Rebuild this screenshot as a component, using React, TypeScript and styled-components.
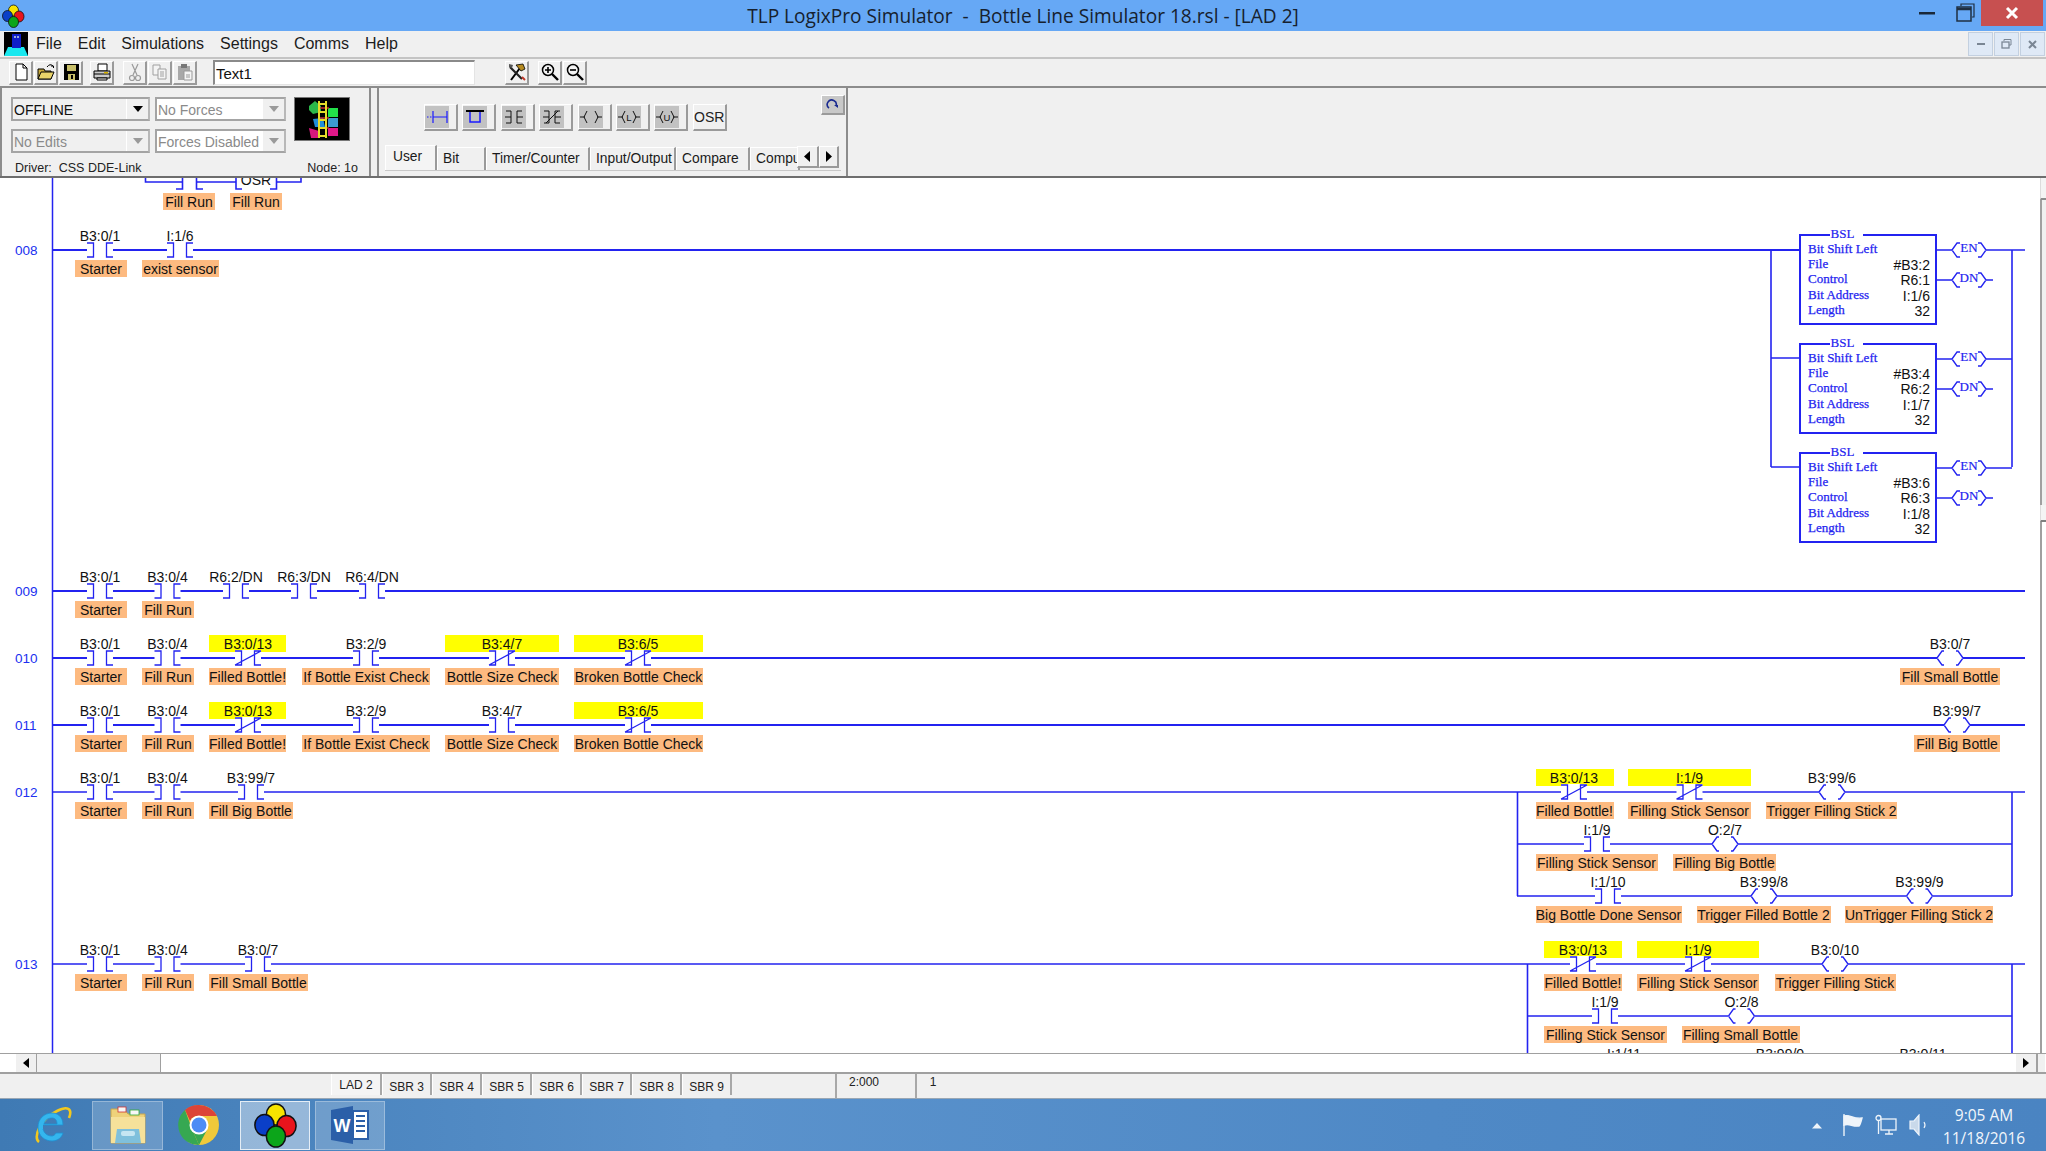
import React from "react";
import styled, { createGlobalStyle } from "styled-components";

const GlobalStyle = createGlobalStyle`
  html, body {
    margin: 0;
    padding: 0;
    width: 2046px;
    height: 1151px;
    overflow: hidden;
    background: #f0f0f0;
    font-family: "Liberation Sans", Arial, sans-serif;
  }
  * { box-sizing: border-box; }
`;

const BLUE = "#2323f0";
const TOP = 178;

const Win = styled.div`
  width: 2046px;
  height: 1151px;
  display: flex;
  flex-direction: column;
  background: #f0f0f0;
`;

/* title bar */
const TitleBar = styled.div`
  height: 31px;
  flex: none;
  background: #66a8f5;
  display: grid;
  grid-template-columns: 1fr auto 1fr;
  align-items: center;
`;
const Title = styled.div`
  font-family: "Open Sans", "Noto Sans", sans-serif;
  font-size: 19.1px;
  color: #16212e;
  white-space: pre;
`;
const TitleLogo = styled.div`
  padding-left: 1px;
  display: flex;
`;
const WinButtons = styled.div`
  justify-self: end;
  display: flex;
  align-items: flex-start;
  height: 31px;
  padding-right: 3px;
`;
const WinBtn = styled.div<{ $w: number; $mr?: number }>`
  width: ${(p) => p.$w}px;
  height: 26px;
  margin-right: ${(p) => p.$mr ?? 0}px;
  display: flex;
  align-items: center;
  justify-content: center;
`;
const CloseBtn = styled(WinBtn)`
  background: #c75050;
`;

/* menu */
const MenuBar = styled.div`
  height: 28px;
  flex: none;
  display: flex;
  align-items: center;
  background: #f0f0f0;
  border-bottom: 2px solid #c4c4c4;
  padding-left: 4px;
`;
const MenuItem = styled.span`
  font-size: 16px;
  color: #1c1c1c;
  margin-left: 16px;
  &:first-of-type {
    margin-left: 8px;
  }
`;
const MdiButtons = styled.div`
  margin-left: auto;
  display: flex;
  gap: 1px;
  padding-right: 1px;
`;
const MdiBtn = styled.div`
  width: 25px;
  height: 24px;
  background: #dfe9f6;
  border: 1px solid #c3d0e0;
  display: flex;
  align-items: center;
  justify-content: center;
`;

/* toolbar */
const Toolbar = styled.div`
  height: 29px;
  flex: none;
  display: flex;
  align-items: center;
  padding: 0 0 0 9px;
  border-bottom: 2px solid #8c8c8c;
`;
const ToolBtn = styled.div<{ $gap?: number }>`
  width: 24px;
  height: 24px;
  margin-left: ${(p) => p.$gap ?? 1}px;
  flex: none;
  display: flex;
  align-items: center;
  justify-content: center;
  background: #f0f0f0;
  border-right: 2px solid #9a9a9a;
  border-bottom: 2px solid #9a9a9a;
  border-top: 1px solid #fff;
  border-left: 1px solid #fff;
`;
const TextBox = styled.div`
  width: 262px;
  height: 25px;
  margin-left: 16px;
  flex: none;
  background: #fff;
  border-top: 2px solid #8a8a8a;
  border-left: 2px solid #8a8a8a;
  border-right: 1px solid #e4e4e4;
  border-bottom: 1px solid #e4e4e4;
  font-size: 15px;
  line-height: 23px;
  padding-left: 1px;
  color: #111;
`;

/* mode strip */
const Strip = styled.div`
  height: 90px;
  flex: none;
  display: flex;
  gap: 6px;
  border-bottom: 2px solid #6e6e6e;
`;
const ModePanel = styled.div`
  width: 371px;
  border-right: 2px solid #8c8c8c;
  border-left: 2px solid #8c8c8c;
  padding: 9px 0 0 9px;
  display: flex;
  flex-direction: column;
`;
const ModeTop = styled.div`
  display: flex;
  gap: 8px;
  align-items: flex-start;
`;
const ComboGrid = styled.div`
  display: grid;
  grid-template-columns: 139px 131px;
  grid-auto-rows: 24px;
  gap: 8px 5px;
`;
const Combo = styled.div<{ $off?: boolean; $white?: boolean }>`
  position: relative;
  background: ${(p) => (p.$white ? "#fff" : "#f0f0f0")};
  border: 2px solid #a4a4a4;
  border-right-color: #b8b8b8;
  color: ${(p) => (p.$off ? "#8a8a8a" : "#111")};
  font-size: 14px;
  line-height: 22px;
  padding-left: 1px;
  white-space: nowrap;
  overflow: hidden;
`;
const ComboArrow = styled.div<{ $off?: boolean }>`
  position: absolute;
  right: 0;
  top: 0;
  bottom: 0;
  width: 22px;
  background: #f0f0f0;
  border-left: 1px solid #fff;
  display: flex;
  align-items: center;
  justify-content: center;
  &::after {
    content: "";
    border-left: 5px solid transparent;
    border-right: 5px solid transparent;
    border-top: 6px solid ${(p) => (p.$off ? "#9a9a9a" : "#000")};
  }
`;
const PlcImage = styled.div`
  width: 56px;
  height: 44px;
  background: #000;
  border: 1px solid #777;
  display: flex;
`;
const DriverRow = styled.div`
  display: flex;
  justify-content: space-between;
  padding: 8px 11px 0 4px;
  font-size: 12.5px;
  color: #222;
  white-space: pre;
`;

const PalettePanel = styled.div`
  position: relative;
  width: 471px;
  border-left: 2px solid #8c8c8c;
  border-right: 2px solid #8c8c8c;
  display: flex;
  flex-direction: column;
  padding-top: 16px;
`;
const PaletteRow = styled.div`
  display: flex;
  gap: 4.4px;
  padding-left: 45px;
`;
const PaletteBtn = styled.div`
  width: 34px;
  height: 27px;
  background: #f0f0f0;
  border-right: 2px solid #9a9a9a;
  border-bottom: 2px solid #9a9a9a;
  border-top: 1px solid #fff;
  border-left: 1px solid #fff;
  display: flex;
  font-size: 14px;
  color: #222;
  align-items: center;
  justify-content: center;
`;
const PaletteFace = styled.div`
  width: 100%;
  margin-right: 7px;
  height: 22px;
  background: #c2c2c2;
  display: flex;
  align-items: center;
  justify-content: center;
`;
const RefreshBtn = styled.div`
  position: absolute;
  right: 1px;
  top: 7px;
  width: 24px;
  height: 20px;
  background: #c8c8c8;
  border-right: 2px solid #9a9a9a;
  border-bottom: 2px solid #9a9a9a;
  border-top: 1px solid #fff;
  border-left: 1px solid #fff;
  display: flex;
  align-items: center;
  justify-content: center;
`;
const TabRow = styled.div`
  position: relative;
  margin-top: 15px;
  margin-left: 6px;
  width: 456px;
  height: 25px;
  display: flex;
  align-items: flex-end;
  border-bottom: 1px solid #c8c8c8;
`;
const Tab = styled.div<{ $w: number; $active?: boolean }>`
  width: ${(p) => p.$w}px;
  height: ${(p) => (p.$active ? 25 : 23)}px;
  flex: none;
  font-size: 13.8px;
  color: #1a1a1a;
  line-height: 22px;
  padding-left: ${(p) => (p.$active ? 7 : 5)}px;
  padding-bottom: ${(p) => (p.$active ? 3 : 0)}px;
  border-top: 1px solid #fff;
  border-left: 1px solid #fff;
  border-right: 2px solid #9a9a9a;
  white-space: nowrap;
  overflow: hidden;
  background: ${(p) => (p.$active ? "#f4f4f4" : "#f0f0f0")};
`;
const TabArrows = styled.div`
  position: absolute;
  right: 2px;
  top: 0;
  display: flex;
`;
const TabArrow = styled.div<{ $w: number }>`
  width: ${(p) => p.$w}px;
  height: 22px;
  background: #f0f0f0;
  border-right: 2px solid #9a9a9a;
  border-bottom: 2px solid #9a9a9a;
  border-top: 1px solid #fff;
  border-left: 1px solid #fff;
  display: flex;
  align-items: center;
  justify-content: center;
`;

/* ladder */
const Canvas = styled.div`
  position: relative;
  height: 875px;
  flex: none;
  background: #fff;
  overflow: hidden;
`;
const WireLayer = styled.svg`
  position: absolute;
  left: 0;
  top: 0;
`;
const Placed = styled.div.attrs<{ $x: number; $y: number; $w?: number }>((p) => ({
  style: { left: p.$x, top: p.$y - TOP, width: p.$w },
}))<{ $x: number; $y: number; $w?: number }>`
  position: absolute;
`;
const RungNo = styled(Placed)`
  font-size: 13.5px;
  line-height: 18px;
  color: #2030f0;
`;
const Addr = styled(Placed)`
  font-size: 14px;
  line-height: 16px;
  color: #111;
  text-align: center;
  white-space: nowrap;
`;
const Tag = styled(Placed)`
  height: 17px;
  background: #fdba80;
  font-size: 14px;
  line-height: 19px;
  color: #111;
  text-align: center;
  white-space: nowrap;
`;
const Highlight = styled(Placed)`
  height: 17px;
  background: #ffff00;
`;
const BslBox = styled(Placed)`
  width: 138px;
  height: 91px;
  background: #fff;
  border: 2px solid ${BLUE};
  padding: 5px 5px 0 7px;
  font-family: "Liberation Serif", serif;
  color: ${BLUE};
`;
const BslTitle = styled.div`
  position: absolute;
  top: -9px;
  left: 29px;
  width: 33px;
  background: #fff;
  text-align: center;
  font-size: 13px;
  line-height: 14px;
  -webkit-text-stroke: 0.2px ${BLUE};
  text-indent: -8px;
`;
const BslRow = styled.div`
  display: flex;
  justify-content: space-between;
  height: 15.2px;
  font-size: 13px;
  line-height: 15px;
  -webkit-text-stroke: 0.25px ${BLUE};
`;
const BslValue = styled.span`
  font-family: "Liberation Sans", sans-serif;
  font-size: 14px;
  color: #111;
  -webkit-text-stroke: 0;
  transform: translateY(2px);
`;
const CoilText = styled(Placed)`
  width: 34px;
  text-align: center;
  font-family: "Liberation Serif", serif;
  font-size: 13px;
  line-height: 14px;
  color: ${BLUE};
  -webkit-text-stroke: 0.2px ${BLUE};
`;

const VScroll = styled.div`
  position: absolute;
  left: 2040px;
  top: 0;
  bottom: 0;
  width: 6px;
  background: #fff;
  border-left: 2px solid #a0a0a0;
`;
const VTopBtn = styled.div`
  position: absolute;
  left: -2px;
  top: 0;
  width: 8px;
  height: 22px;
  background: #f4f4f4;
  border-left: 1px solid #dcdcdc;
  border-bottom: 2px solid #8c8c8c;
`;
const VThumb = styled.div`
  position: absolute;
  left: 0;
  top: 22px;
  width: 100%;
  height: 305px;
  background: #f0f0f0;
`;
const VNotch = styled.div`
  position: absolute;
  left: -2px;
  top: 327px;
  width: 8px;
  height: 17px;
  background: #f4f4f4;
  border-left: 1px solid #dcdcdc;
  border-bottom: 2px solid #808080;
`;

const HScroll = styled.div`
  height: 21px;
  flex: none;
  background: #fff;
  display: flex;
  padding-left: 16px;
  border-top: 1px solid #a0a0a0;
  border-bottom: 2px solid #a0a0a0;
`;
const HArrow = styled.div<{ $dir: "l" | "r" }>`
  width: 21px;
  height: 18px;
  background: #f0f0f0;
  border-right: 1px solid #a0a0a0;
  display: flex;
  align-items: center;
  justify-content: center;
  &::after {
    content: "";
    border-top: 5px solid transparent;
    border-bottom: 5px solid transparent;
    ${(p) => (p.$dir === "l" ? "border-right: 6px solid #000;" : "border-left: 6px solid #000;")}
  }
`;
const HThumb = styled.div`
  width: 124px;
  background: #f0f0f0;
  border-right: 1px solid #a0a0a0;
`;
const HTrack = styled.div`
  width: 1855px;
`;
const HEnd = styled.div`
  width: 8px;
  background: #f0f0f0;
  border-left: 1px solid #a0a0a0;
`;

const StatusBar = styled.div`
  height: 25px;
  flex: none;
  display: flex;
  background: #f0f0f0;
  padding-left: 331px;
  border-bottom: 1px solid #9aa7b4;
  font-size: 12px;
  color: #222;
`;
const SheetTab = styled.div<{ $active?: boolean }>`
  width: ${(p) => (p.$active ? 51 : 50)}px;
  height: 21px;
  padding-top: ${(p) => (p.$active ? 3 : 5)}px;
  line-height: 17px;
  text-align: center;
  border-right: 2px solid #a8a8a8;
  background: ${(p) => (p.$active ? "#f4f4f4" : "#f0f0f0")};
  border-left: 1px solid #fff;
`;
const StatusCell = styled.div<{ $w: number; $ml?: number; $pr: number }>`
  width: ${(p) => p.$w}px;
  margin-left: ${(p) => p.$ml ?? 0}px;
  padding-right: ${(p) => p.$pr}px;
  border-left: 2px solid #a8a8a8;
  text-align: center;
  line-height: 16px;
`;

/* taskbar */
const Taskbar = styled.div`
  height: 52px;
  flex: none;
  display: flex;
  align-items: center;
  background: linear-gradient(90deg, #3f7ab4 0%, #5a92cc 35%, #4f89c6 70%, #4a84c2 100%);
  padding-left: 29px;
`;
const TaskItem = styled.div<{ $active?: boolean; $open?: boolean; $w: number; $ml?: number }>`
  width: ${(p) => p.$w}px;
  height: 49px;
  margin-left: ${(p) => p.$ml ?? 0}px;
  flex: none;
  display: flex;
  align-items: center;
  justify-content: center;
  background: ${(p) =>
    p.$active ? "rgba(255,255,255,0.42)" : p.$open ? "rgba(255,255,255,0.2)" : "transparent"};
  border: ${(p) =>
    p.$active
      ? "1px solid rgba(255,255,255,0.75)"
      : p.$open
        ? "1px solid rgba(255,255,255,0.3)"
        : "none"};
`;
const Tray = styled.div`
  margin-left: auto;
  display: flex;
  align-items: center;
  height: 100%;
`;
const TrayIcon = styled.div<{ $mr: number }>`
  display: flex;
  margin-right: ${(p) => p.$mr}px;
`;
const Clock = styled.div`
  width: 114px;
  margin-right: 5px;
  padding-top: 3px;
  font-family: "Open Sans", "Noto Sans", sans-serif;
  font-size: 15.5px;
  line-height: 23px;
  text-align: center;
  color: #f2f6fb;
`;

/* ladder data */
type Kind = "no" | "nc" | "coil";
type Item = {
  kind: Kind;
  c: number;
  addr: string;
  tag: string;
  tx: number;
  tw: number;
  hi?: boolean;
};
type Branch = { y: number; x1: number; x2: number; items: Item[] };

const it = (kind: Kind, c: number, addr: string, tag: string, tx: number, tw: number, hi?: boolean): Item => ({
  kind, c, addr, tag, tx, tw, hi,
});
const starter = it("no", 100, "B3:0/1", "Starter", 75, 52);
const fillRun = it("no", 167.5, "B3:0/4", "Fill Run", 142, 52);
const filled = (hi: boolean) => it("nc", 248, "B3:0/13", "Filled Bottle!", 209, 77, hi);
const exist = it("no", 366, "B3:2/9", "If Bottle Exist Check", 302, 128);
const broken = it("nc", 638, "B3:6/5", "Broken Bottle Check", 574, 129, true);

const branches: Branch[] = [
  {
    y: 250, x1: 52, x2: 1799,
    items: [starter, it("no", 180, "I:1/6", "exist sensor", 142, 77)],
  },
  {
    y: 591, x1: 52, x2: 2025,
    items: [
      starter,
      fillRun,
      it("no", 236, "R6:2/DN", "", 0, 0),
      it("no", 304, "R6:3/DN", "", 0, 0),
      it("no", 372, "R6:4/DN", "", 0, 0),
    ],
  },
  {
    y: 658, x1: 52, x2: 2025,
    items: [
      starter, fillRun, filled(true), exist,
      it("nc", 502, "B3:4/7", "Bottle Size Check", 445, 114, true),
      broken,
      it("coil", 1950, "B3:0/7", "Fill Small Bottle", 1900, 100),
    ],
  },
  {
    y: 725, x1: 52, x2: 2025,
    items: [
      starter, fillRun, filled(true), exist,
      it("no", 502, "B3:4/7", "Bottle Size Check", 445, 114),
      broken,
      it("coil", 1957, "B3:99/7", "Fill Big Bottle", 1914, 86),
    ],
  },
  {
    y: 792, x1: 52, x2: 2025,
    items: [
      starter, fillRun,
      it("no", 251, "B3:99/7", "Fill Big Bottle", 209, 84),
      it("nc", 1574, "B3:0/13", "Filled Bottle!", 1535.5, 78, true),
      it("nc", 1689.5, "I:1/9", "Filling Stick Sensor", 1628, 123, true),
      it("coil", 1832, "B3:99/6", "Trigger Filling Stick 2", 1766, 131),
    ],
  },
  {
    y: 844, x1: 1517, x2: 2012,
    items: [
      it("no", 1597, "I:1/9", "Filling Stick Sensor", 1535.5, 122),
      it("coil", 1725, "O:2/7", "Filling Big Bottle", 1673, 103),
    ],
  },
  {
    y: 896, x1: 1517, x2: 2012,
    items: [
      it("no", 1608, "I:1/10", "Big Bottle Done Sensor", 1535.5, 146),
      it("coil", 1764, "B3:99/8", "Trigger Filled Bottle 2", 1696.5, 134),
      it("coil", 1919.5, "B3:99/9", "UnTrigger Filling Stick 2", 1845, 148),
    ],
  },
  {
    y: 964, x1: 52, x2: 2025,
    items: [
      starter, fillRun,
      it("no", 258, "B3:0/7", "Fill Small Bottle", 209, 99),
      it("nc", 1583, "B3:0/13", "Filled Bottle!", 1544, 78, true),
      it("nc", 1698, "I:1/9", "Filling Stick Sensor", 1637, 122, true),
      it("coil", 1835, "B3:0/10", "Trigger Filling Stick", 1774.5, 121),
    ],
  },
  {
    y: 1016, x1: 1527, x2: 2012,
    items: [
      it("no", 1605, "I:1/9", "Filling Stick Sensor", 1544, 123),
      it("coil", 1741.5, "O:2/8", "Filling Small Bottle", 1681.5, 118),
    ],
  },
  {
    y: 1068, x1: 1527, x2: 2012,
    items: [
      it("no", 1624, "I:1/11", "", 0, 0),
      it("coil", 1780, "B3:99/0", "", 0, 0),
      it("coil", 1923, "B3:0/11", "", 0, 0),
    ],
  },
];

const rungNumbers = [
  { n: "008", y: 250 },
  { n: "009", y: 591 },
  { n: "010", y: 658 },
  { n: "011", y: 725 },
  { n: "012", y: 792 },
  { n: "013", y: 964 },
];

const bsl = [
  { y: 234, file: "#B3:2", ctl: "R6:1", bit: "I:1/6" },
  { y: 343, file: "#B3:4", ctl: "R6:2", bit: "I:1/7" },
  { y: 452, file: "#B3:6", ctl: "R6:3", bit: "I:1/8" },
];

function coilPath(c: number, y: number, half: number, tick: number) {
  const h = 7;
  const o = half - 5;
  return `M${c - half} ${y}L${c - o} ${y - h}H${c - o + tick}M${c - half} ${y}L${c - o} ${y + h}H${c - o + tick}
    M${c + half} ${y}L${c + o} ${y - h}H${c + o - tick}M${c + half} ${y}L${c + o} ${y + h}H${c + o - tick}`;
}

function contactPath(c: number, y: number, nc: boolean) {
  const w = 6.5;
  const t = 13;
  const h = 7;
  let d = `M${c - t} ${y - h}H${c - w}V${y + h}H${c - t}M${c + t} ${y - h}H${c + w}V${y + h}H${c + t}`;
  if (nc) d += `M${c - t} ${y + h}L${c + t} ${y - h}`;
  return d;
}

function wireSegments(b: Branch) {
  let x = b.x1;
  const segs: string[] = [];
  b.items.forEach((i) => {
    const gap = i.kind === "coil" ? 13 : 6.5;
    segs.push(`M${x} ${b.y}H${i.c - gap}`);
    x = i.c + gap;
  });
  segs.push(`M${x} ${b.y}H${b.x2}`);
  return segs.join("");
}

function LadderWires() {
  return (
    <WireLayer width={2046} height={875} viewBox={`0 ${TOP} 2046 875`}>
      <g fill="none" stroke={BLUE}>
        <path d={`M52.5 ${TOP}V1053`} strokeWidth={1.5} />
        {/* rung 007, cut off by the top of the view */}
        <path
          strokeWidth={1.6}
          d="M145.5 178V182H182.5M176 189H182.5V178M196.5 178V189H203M196.5 182H236V189H242M236 182V178M276.5 178V189H270M276.5 182H301V178"
        />
        {/* BSL branches */}
        <path strokeWidth={1.6} d="M1771 250V467M1771 358H1799M1771 467H1799" />
        <path strokeWidth={1.6} d="M2012 250V467" />
        {bsl.map((b) => {
          const en = b.y + 16;
          const dn = b.y + 46;
          return (
            <g key={b.y} strokeWidth={1.6}>
              <path d={`M1937 ${en}H1952M1986 ${en}H${b.y === 234 ? 2025 : 2012}`} />
              <path d={`M1937 ${dn}H1952M1986 ${dn}H1993`} />
              <path d={coilPath(1969, en, 17, 3)} strokeWidth={1.3} />
              <path d={coilPath(1969, dn, 17, 3)} strokeWidth={1.3} />
            </g>
          );
        })}
        {/* parallel branch rails */}
        <path strokeWidth={1.6} d="M1517.5 792V896M2012 792V896M1527.5 964V1068M2012 964V1068" />
        {branches.map((b) => (
          <g key={b.y}>
            <path d={wireSegments(b)} strokeWidth={b.x1 === 52 && b.y < 740 ? 2 : 1.7} />
            {b.items.map((i) =>
              i.kind === "coil" ? (
                <g key={i.c}>
                  <rect x={i.c - 12} y={b.y - 8} width={24} height={16} fill="#fff" stroke="none" />
                  <path d={coilPath(i.c, b.y, 13, 2)} strokeWidth={1.3} />
                </g>
              ) : (
                <g key={i.c}>
                  <rect x={i.c - 13} y={b.y - 8} width={26} height={16} fill="#fff" stroke="none" />
                  <path d={contactPath(i.c, b.y, i.kind === "nc")} strokeWidth={1.3} />
                </g>
              )
            )}
          </g>
        ))}
      </g>
    </WireLayer>
  );
}

function Ladder() {
  const all = branches.flatMap((b) => b.items.map((i) => ({ ...i, y: b.y })));
  return (
    <Canvas>
      {all
        .filter((i) => i.hi)
        .map((i) => (
          <Highlight key={`h${i.y}-${i.c}`} $x={i.tx} $y={i.y - 23} $w={i.tw} />
        ))}
      <LadderWires />
      {rungNumbers.map((r) => (
        <RungNo key={r.n} $x={15} $y={r.y - 8}>
          {r.n}
        </RungNo>
      ))}
      <Tag $x={163} $y={193} $w={52}>Fill Run</Tag>
      <Tag $x={230} $y={193} $w={52}>Fill Run</Tag>
      <Addr $x={236} $y={172} $w={40}>OSR</Addr>
      {all.map((i) => (
        <React.Fragment key={`i${i.y}-${i.c}`}>
          <Addr $x={i.c - 50} $y={i.y - 22} $w={100}>
            {i.addr}
          </Addr>
          {i.tag && (
            <Tag $x={i.tx} $y={i.y + 10} $w={i.tw}>
              {i.tag}
            </Tag>
          )}
        </React.Fragment>
      ))}
      {bsl.map((b) => (
        <React.Fragment key={b.y}>
          <BslBox $x={1799} $y={b.y}>
            <BslTitle>BSL</BslTitle>
            <BslRow>Bit Shift Left</BslRow>
            <BslRow>File<BslValue>{b.file}</BslValue></BslRow>
            <BslRow>Control<BslValue>{b.ctl}</BslValue></BslRow>
            <BslRow>Bit Address<BslValue>{b.bit}</BslValue></BslRow>
            <BslRow>Length<BslValue>32</BslValue></BslRow>
          </BslBox>
          <CoilText $x={1952} $y={b.y + 7}>EN</CoilText>
          <CoilText $x={1952} $y={b.y + 37}>DN</CoilText>
        </React.Fragment>
      ))}
      <VScroll>
        <VTopBtn />
        <VThumb />
        <VNotch />
      </VScroll>
    </Canvas>
  );
}

/* drawings */
function Balls({ size }: { size: number }) {
  return (
    <svg width={size} height={size} viewBox="0 0 24 24">
      <g stroke="#111" strokeWidth="0.8">
        <ellipse cx="12.5" cy="6.5" rx="5" ry="5.5" fill="#f7e400" />
        <ellipse cx="6.5" cy="12" rx="5" ry="5.5" fill="#0a3fc8" />
        <ellipse cx="18" cy="12.5" rx="5" ry="5.5" fill="#e8141c" />
        <ellipse cx="12.5" cy="18" rx="5" ry="5.5" fill="#0ca51a" />
      </g>
    </svg>
  );
}

function DoorIcon() {
  return (
    <svg width="24" height="24" viewBox="0 0 24 24">
      <rect width="24" height="24" fill="#000" />
      <path d="M0 24L4 15H20L24 24Z" fill="#19e8ef" />
      <rect x="8" y="2" width="9" height="14" fill="#1020c8" />
      <rect x="10" y="4" width="2" height="2" fill="#9ad" />
      <rect x="13" y="4" width="2" height="2" fill="#9ad" />
    </svg>
  );
}

const tb = { w: 20, h: 20, v: "0 0 20 20" };
function NewIcon() {
  return (
    <svg width={tb.w} height={tb.h} viewBox={tb.v}>
      <path d="M5 2H12L16 6V18H5Z" fill="#fff" stroke="#000" />
      <path d="M12 2V6H16" fill="none" stroke="#000" />
    </svg>
  );
}
function OpenIcon() {
  return (
    <svg width={tb.w} height={tb.h} viewBox={tb.v}>
      <path d="M2 7H8L9 9H15V17H2Z" fill="#c9a93a" stroke="#000" />
      <path d="M2 17L5 10H18L15 17Z" fill="#e8d36a" stroke="#000" />
      <path d="M11 5Q14 1 17 4M15 4H17.5V6" fill="none" stroke="#000" />
    </svg>
  );
}
function SaveIcon() {
  return (
    <svg width={tb.w} height={tb.h} viewBox={tb.v}>
      <rect x="3" y="2" width="15" height="16" fill="#000" />
      <rect x="6" y="3" width="9" height="6" fill="#c8bf6a" />
      <rect x="7" y="12" width="7" height="6" fill="#c8bf6a" />
      <rect x="10" y="13" width="2" height="4" fill="#000" />
    </svg>
  );
}
function PrintIcon() {
  return (
    <svg width={tb.w} height={tb.h} viewBox={tb.v}>
      <path d="M6 2H15V9H6Z" fill="#fff" stroke="#000" />
      <path d="M2 9H18V16H2Z" fill="#ccc" stroke="#000" />
      <path d="M2 12H18" stroke="#000" />
      <rect x="12" y="10" width="4" height="1.5" fill="#d8b400" />
      <path d="M5 16H15V18H5Z" fill="#fff" stroke="#000" />
    </svg>
  );
}
function CutIcon() {
  return (
    <svg width={tb.w} height={tb.h} viewBox={tb.v} fill="none" stroke="#9a9a9a" strokeWidth="1.2">
      <path d="M7 2L12 13M13 2L8 13" />
      <circle cx="7" cy="16" r="2.5" />
      <circle cx="13" cy="16" r="2.5" />
    </svg>
  );
}
function CopyIcon() {
  return (
    <svg width={tb.w} height={tb.h} viewBox={tb.v} fill="#f4f4f4" stroke="#a0a0a0">
      <path d="M3 3H10V13H3Z" />
      <path d="M8 7H16V17H8Z" />
      <path d="M10 10H14M10 12H14M10 14H14" />
    </svg>
  );
}
function PasteIcon() {
  return (
    <svg width={tb.w} height={tb.h} viewBox={tb.v}>
      <rect x="3" y="4" width="12" height="14" fill="#a8a8a8" />
      <rect x="6" y="2" width="6" height="4" fill="#777" />
      <path d="M9 9H17V18H9Z" fill="#f4f4f4" stroke="#999" />
      <path d="M11 13H15M11 15H15" stroke="#999" />
    </svg>
  );
}
function ToolsIcon() {
  return (
    <svg width={tb.w} height={tb.h} viewBox={tb.v}>
      <path d="M4 18L13 6" stroke="#000" strokeWidth="2" />
      <path d="M9 3L16 2L18 7L14 9Z" fill="#b58a20" stroke="#000" strokeWidth="0.8" />
      <path d="M3 5L15 17" stroke="#222" strokeWidth="2.2" />
      <path d="M2 2L6 3L5 6L2 5Z" fill="#555" />
      <path d="M15 15L18 18" stroke="#c0392b" strokeWidth="2" />
    </svg>
  );
}
function ZoomIcon({ plus }: { plus?: boolean }) {
  return (
    <svg width={tb.w} height={tb.h} viewBox={tb.v} fill="none" stroke="#000">
      <circle cx="8" cy="8" r="5.5" fill="#f4f4f4" strokeWidth="1.5" />
      <path d="M12 12L18 18" strokeWidth="2.4" />
      <path d={plus ? "M5 8H11M8 5V11" : "M5 8H11"} strokeWidth="1.6" />
    </svg>
  );
}
function PlcPicture() {
  return (
    <svg width="54" height="42" viewBox="0 0 54 42">
      <path d="M14 8L20 3L26 8L26 14L18 16L14 12Z" fill="#2bb84a" />
      <rect x="33" y="10" width="10" height="9" fill="#22e04a" />
      <path d="M18 21L28 20L30 29L20 29Z" fill="#1f8fd8" />
      <rect x="33" y="20" width="10" height="9" fill="#3c9ad0" />
      <path d="M14 30L24 33L24 40L16 40Z" fill="#d8187c" />
      <rect x="33" y="30" width="10" height="8" fill="#e0188a" />
      <path d="M24 10H34M24 20H34M24 30H34" stroke="#c83030" strokeWidth="1.5" />
      <path d="M24 3V40M31 3V40M24 6H31M24 14H31M24 22H31M24 30H31M24 38H31" stroke="#e5dc2a" strokeWidth="2" fill="none" />
    </svg>
  );
}

const pal = { w: 24, h: 16, v: "0 0 24 16" };
function PalBranchIcon() {
  return (
    <svg width={pal.w} height={pal.h} viewBox={pal.v} fill="none" stroke="#1a1aff">
      <path d="M2 8H8" strokeDasharray="1.5 1.5" />
      <path d="M8 2V14M8 8H22M22 2V14" strokeWidth="1.2" />
    </svg>
  );
}
function PalRungIcon() {
  return (
    <svg width={pal.w} height={pal.h} viewBox={pal.v} fill="none">
      <path d="M3 2H21" stroke="#000" strokeWidth="2" />
      <path d="M7 3V13H17V3" stroke="#1a1aff" strokeWidth="1.5" />
    </svg>
  );
}
function PalContactIcon({ closed }: { closed?: boolean }) {
  return (
    <svg width={pal.w} height={pal.h} viewBox={pal.v} fill="none" stroke="#111">
      <path d="M3 8H9M4 2H9V14H4M20 2H15V14H20M15 8H21" />
      {closed && <path d="M6 14L18 2" />}
    </svg>
  );
}
function PalCoilIcon({ letter }: { letter?: string }) {
  return (
    <svg width={pal.w} height={pal.h} viewBox={pal.v} fill="none" stroke="#111">
      <path d="M1 8H6M8 2L5 8L8 14M16 2L19 8L16 14M18 8H23" />
      {letter && (
        <text x="12" y="11.5" fontSize="9.5" textAnchor="middle" fill="#111" stroke="none" fontFamily="Liberation Sans">
          {letter}
        </text>
      )}
    </svg>
  );
}

function IeLogo() {
  return (
    <svg width="42" height="42" viewBox="0 0 42 42" fill="none">
      <path d="M8 38C2 34 8 16 26 7C36 2 42 4 38 14" stroke="#f2c81e" strokeWidth="2.6" />
      <path d="M12 21H32C32 12 26 9 21 9C13 9 7 15 7 23C7 32 14 37 21 37C27 37 31 33 32 29H25C24 31 22 32 21 32C16 32 13 29 12 25M13 20C14 16 17 14 21 14C24 14 26 16 26 20Z" fill="#34b6ee" fillRule="evenodd" stroke="#1f8fd0" strokeWidth="0.8" />
    </svg>
  );
}
function FolderLogo() {
  return (
    <svg width="44" height="44" viewBox="0 0 44 44">
      <path d="M5 6H18L22 11H39V40H5Z" fill="#efd27a" stroke="#c8a650" />
      <rect x="12" y="4" width="8" height="5" fill="#f7f7f7" stroke="#c33" strokeWidth="0.8" />
      <rect x="24" y="7" width="9" height="5" fill="#f7f7f7" stroke="#3a3" strokeWidth="0.8" />
      <path d="M5 14H39V40H5Z" fill="#f6e19a" />
      <path d="M11 26H33L35 40H9Z" fill="#7fc0dc" />
      <rect x="15" y="28" width="14" height="5" rx="2" fill="#c6e6f2" />
    </svg>
  );
}
function ChromeLogo() {
  return (
    <svg width="42" height="42" viewBox="0 0 42 42">
      <circle cx="21" cy="21" r="20" fill="#f0c93a" />
      <path d="M21 1A20 20 0 0 1 39 12H21A9 9 0 0 0 12 17L7 6A20 20 0 0 1 21 1Z" fill="#dc4437" />
      <path d="M7 6L14 25L21 41A20 20 0 0 1 7 6Z" fill="#36a852" />
      <path d="M14 25A9 9 0 0 0 29 26L21 41Z" fill="#36a852" />
      <circle cx="21" cy="21" r="9.5" fill="#fff" />
      <circle cx="21" cy="21" r="7.5" fill="#4d8cf5" />
    </svg>
  );
}
function WordLogo() {
  return (
    <svg width="42" height="40" viewBox="0 0 42 40">
      <path d="M2 5L24 1V39L2 35Z" fill="#2b5fa8" />
      <rect x="24" y="6" width="15" height="28" fill="#fff" stroke="#2b5fa8" strokeWidth="2" />
      <path d="M27 11H36M27 16H36M27 21H36M27 26H36" stroke="#2b5fa8" strokeWidth="2" />
      <text x="13" y="27" fontSize="18" fontWeight="700" textAnchor="middle" fill="#fff" fontFamily="Liberation Sans">
        W
      </text>
    </svg>
  );
}

function ArrowGlyph({ dir }: { dir: "l" | "r" }) {
  return (
    <svg width="7" height="11" viewBox="0 0 7 11">
      <path d={dir === "l" ? "M6 0V11L0 5.5Z" : "M1 0V11L7 5.5Z"} fill="#000" />
    </svg>
  );
}

export default function App() {
  const sheets = ["SBR 3", "SBR 4", "SBR 5", "SBR 6", "SBR 7", "SBR 8", "SBR 9"];
  return (
    <Win>
      <GlobalStyle />
      <TitleBar>
        <TitleLogo>
          <Balls size={24} />
        </TitleLogo>
        <Title>TLP LogixPro Simulator  -  Bottle Line Simulator 18.rsl - [LAD 2]</Title>
        <WinButtons>
          <WinBtn $w={16} $mr={20}>
            <svg width="16" height="4"><rect width="16" height="2.5" y="1" fill="#1a2838" /></svg>
          </WinBtn>
          <WinBtn $w={20} $mr={6}>
            <svg width="20" height="20" viewBox="0 0 20 20" fill="none" stroke="#1f2f42">
              <path d="M6 3V1H19V14H17" strokeWidth="1.2" />
              <rect x="2" y="4" width="14" height="14" strokeWidth="1.5" />
              <path d="M2 6H16" strokeWidth="2.5" />
            </svg>
          </WinBtn>
          <CloseBtn $w={62}>
            <svg width="14" height="14" viewBox="0 0 14 14">
              <path d="M2 2L12 12M12 2L2 12" stroke="#fff" strokeWidth="3" />
            </svg>
          </CloseBtn>
        </WinButtons>
      </TitleBar>

      <MenuBar>
        <DoorIcon />
        {["File", "Edit", "Simulations", "Settings", "Comms", "Help"].map((m) => (
          <MenuItem key={m}>{m}</MenuItem>
        ))}
        <MdiButtons>
          <MdiBtn>
            <svg width="8" height="3"><rect width="8" height="2" fill="#7a8694" /></svg>
          </MdiBtn>
          <MdiBtn>
            <svg width="11" height="10" viewBox="0 0 11 10" fill="none" stroke="#7a8694">
              <path d="M3 2V.5H10V6H8" />
              <rect x="1" y="3" width="7" height="6" strokeWidth="1.3" />
            </svg>
          </MdiBtn>
          <MdiBtn>
            <svg width="9" height="9" viewBox="0 0 9 9">
              <path d="M1 1L8 8M8 1L1 8" stroke="#7a8694" strokeWidth="2" />
            </svg>
          </MdiBtn>
        </MdiButtons>
      </MenuBar>

      <Toolbar>
        <ToolBtn $gap={0}><NewIcon /></ToolBtn>
        <ToolBtn><OpenIcon /></ToolBtn>
        <ToolBtn><SaveIcon /></ToolBtn>
        <ToolBtn $gap={7}><PrintIcon /></ToolBtn>
        <ToolBtn $gap={9}><CutIcon /></ToolBtn>
        <ToolBtn><CopyIcon /></ToolBtn>
        <ToolBtn><PasteIcon /></ToolBtn>
        <TextBox>Text1</TextBox>
        <ToolBtn $gap={30}><ToolsIcon /></ToolBtn>
        <ToolBtn $gap={9}><ZoomIcon plus /></ToolBtn>
        <ToolBtn><ZoomIcon /></ToolBtn>
      </Toolbar>

      <Strip>
        <ModePanel>
          <ModeTop>
            <ComboGrid>
              <Combo>OFFLINE<ComboArrow /></Combo>
              <Combo $off $white>No Forces<ComboArrow $off /></Combo>
              <Combo $off>No Edits<ComboArrow $off /></Combo>
              <Combo $off $white>Forces Disabled<ComboArrow $off /></Combo>
            </ComboGrid>
            <PlcImage><PlcPicture /></PlcImage>
          </ModeTop>
          <DriverRow>
            <span>Driver:  CSS DDE-Link</span>
            <span>Node: 1o</span>
          </DriverRow>
        </ModePanel>
        <PalettePanel>
          <RefreshBtn>
            <svg width="14" height="12" viewBox="0 0 14 12" fill="none" stroke="#1a2a90" strokeWidth="1.6">
              <path d="M3 9A4.5 4.5 0 1 1 10 7" />
              <path d="M8 6H12V9Z" fill="#1a2a90" stroke="none" />
            </svg>
          </RefreshBtn>
          <PaletteRow>
            <PaletteBtn><PaletteFace><PalBranchIcon /></PaletteFace></PaletteBtn>
            <PaletteBtn><PaletteFace><PalRungIcon /></PaletteFace></PaletteBtn>
            <PaletteBtn><PaletteFace><PalContactIcon /></PaletteFace></PaletteBtn>
            <PaletteBtn><PaletteFace><PalContactIcon closed /></PaletteFace></PaletteBtn>
            <PaletteBtn><PaletteFace><PalCoilIcon /></PaletteFace></PaletteBtn>
            <PaletteBtn><PaletteFace><PalCoilIcon letter="L" /></PaletteFace></PaletteBtn>
            <PaletteBtn><PaletteFace><PalCoilIcon letter="U" /></PaletteFace></PaletteBtn>
            <PaletteBtn>OSR</PaletteBtn>
          </PaletteRow>
          <TabRow>
            <Tab $w={52} $active>User</Tab>
            <Tab $w={49}>Bit</Tab>
            <Tab $w={104}>Timer/Counter</Tab>
            <Tab $w={86}>Input/Output</Tab>
            <Tab $w={74}>Compare</Tab>
            <Tab $w={50}>Compute</Tab>
            <TabArrows>
              <TabArrow $w={22}><ArrowGlyph dir="l" /></TabArrow>
              <TabArrow $w={20}><ArrowGlyph dir="r" /></TabArrow>
            </TabArrows>
          </TabRow>
        </PalettePanel>
      </Strip>

      <Ladder />

      <HScroll>
        <HArrow $dir="l" />
        <HThumb />
        <HTrack />
        <HArrow $dir="r" />
        <HEnd />
      </HScroll>

      <StatusBar>
        <SheetTab $active>LAD 2</SheetTab>
        {sheets.map((s) => (
          <SheetTab key={s}>{s}</SheetTab>
        ))}
        <StatusCell $w={80} $ml={103} $pr={24}>2:000</StatusCell>
        <StatusCell $w={40} $pr={6}>1</StatusCell>
      </StatusBar>

      <Taskbar>
        <TaskItem $w={46}><IeLogo /></TaskItem>
        <TaskItem $w={71} $ml={17} $open><FolderLogo /></TaskItem>
        <TaskItem $w={66} $ml={3}><ChromeLogo /></TaskItem>
        <TaskItem $w={70} $ml={8} $active><Balls size={46} /></TaskItem>
        <TaskItem $w={70} $ml={5} $open><WordLogo /></TaskItem>
        <Tray>
          <TrayIcon $mr={19}>
            <svg width="12" height="7"><path d="M1 6.5L6 1L11 6.5Z" fill="#eef4fa" /></svg>
          </TrayIcon>
          <TrayIcon $mr={11}>
            <svg width="22" height="24" viewBox="0 0 22 24" fill="none" stroke="#eef4fa" strokeWidth="1.4">
              <path d="M2 1V23" />
              <path d="M2 3C8 1 10 6 20 5C19 9 18 12 17 13C10 14 8 10 2 12Z" fill="#eef4fa" />
            </svg>
          </TrayIcon>
          <TrayIcon $mr={12}>
            <svg width="22" height="22" viewBox="0 0 22 22" fill="none" stroke="#eef4fa" strokeWidth="1.3">
              <rect x="6" y="5" width="15" height="11" />
              <circle cx="3.5" cy="4" r="2.5" />
              <path d="M3.5 7V20M10 20H18M14 16V20" />
            </svg>
          </TrayIcon>
          <TrayIcon $mr={0}>
            <svg width="18" height="22" viewBox="0 0 18 22" fill="none" stroke="#eef4fa" strokeWidth="1.2">
              <path d="M1 7H5L10 1V21L5 15H1Z" fill="#c9d9ea" />
              <path d="M15 8Q17 11 15 14" />
            </svg>
          </TrayIcon>
          <Clock>
            <div>9:05 AM</div>
            <div>11/18/2016</div>
          </Clock>
        </Tray>
      </Taskbar>
    </Win>
  );
}
